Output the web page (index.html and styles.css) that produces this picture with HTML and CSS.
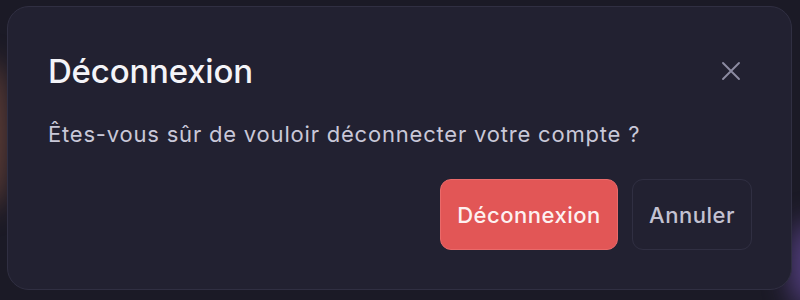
FILE: index.html
```html
<!DOCTYPE html>
<html lang="fr">
<head>
<meta charset="utf-8">
<link rel="stylesheet" href="styles.css">
</head>
<body>
<div class="backdrop">
  <div class="glow glow-left"></div>
  <div class="glow glow-right"></div>
  <div class="dialog">
    <div class="dialog-header">
      <h2 class="dialog-title">Déconnexion</h2>
      <button class="close-btn" aria-label="Fermer">
        <svg width="20" height="20" viewBox="0 0 20 20" fill="none" stroke="currentColor" stroke-width="1.9" stroke-linecap="round"><path d="M2 2 L18 18 M18 2 L2 18"/></svg>
      </button>
    </div>
    <p class="dialog-text">Êtes-vous sûr de vouloir déconnecter votre compte ?</p>
    <div class="dialog-actions">
      <button class="btn btn-danger">Déconnexion</button>
      <button class="btn btn-ghost">Annuler</button>
    </div>
  </div>
</div>
</body>
</html>
```
FILE: styles.css
```css
* { box-sizing: border-box; }
html, body { margin: 0; padding: 0; }
body {
  width: 800px;
  height: 300px;
  background: #1b1a26;
  font-family: Inter, "Noto Sans", sans-serif;
  overflow: hidden;
}
.backdrop {
  position: relative;
  width: 800px;
  height: 300px;
  padding: 6px 8px 10px 7px;
}
.glow {
  position: absolute;
  border-radius: 50%;
  filter: blur(14px);
}
.glow-left {
  left: -32px;
  top: 60px;
  width: 40px;
  height: 150px;
  background: rgba(170, 100, 70, 0.5);
}
.glow-right {
  right: -30px;
  top: 220px;
  width: 40px;
  height: 90px;
  background: rgba(110, 80, 170, 0.7);
}
.dialog {
  position: relative;
  height: 284px;
  background: #222131;
  border: 1px solid #302f42;
  border-radius: 22px;
  padding: 43px 39px 39px 40px;
  display: flex;
  flex-direction: column;
}
.dialog-header {
  display: flex;
  align-items: center;
  justify-content: space-between;
}
.dialog-title {
  margin: 0;
  font-size: 33px;
  font-weight: 500;
  color: #f4f4f8;
  line-height: 42px;
  letter-spacing: -0.2px;
}
.close-btn {
  background: none;
  border: none;
  padding: 0;
  margin-right: 11px;
  color: #8c8ba2;
  display: flex;
}
.dialog-text {
  margin: 28px 0 0;
  font-size: 22px;
  line-height: 28px;
  letter-spacing: 0.8px;
  color: #c9c8d8;
}
.dialog-actions {
  margin-top: auto;
  display: flex;
  justify-content: flex-end;
  gap: 14px;
}
.btn {
  font-family: inherit;
  font-size: 22px;
  font-weight: 500;
  letter-spacing: 0.5px;
  height: 71px;
  border-radius: 11px;
  padding: 0;
  cursor: pointer;
}
.btn-danger {
  width: 178px;
  background: #e25656;
  border: 1px solid #ea6a6a;
  color: #fdf1f1;
}
.btn-ghost {
  width: 120px;
  background: transparent;
  border: 1px solid #302f42;
  color: #c3c2d2;
}
```
